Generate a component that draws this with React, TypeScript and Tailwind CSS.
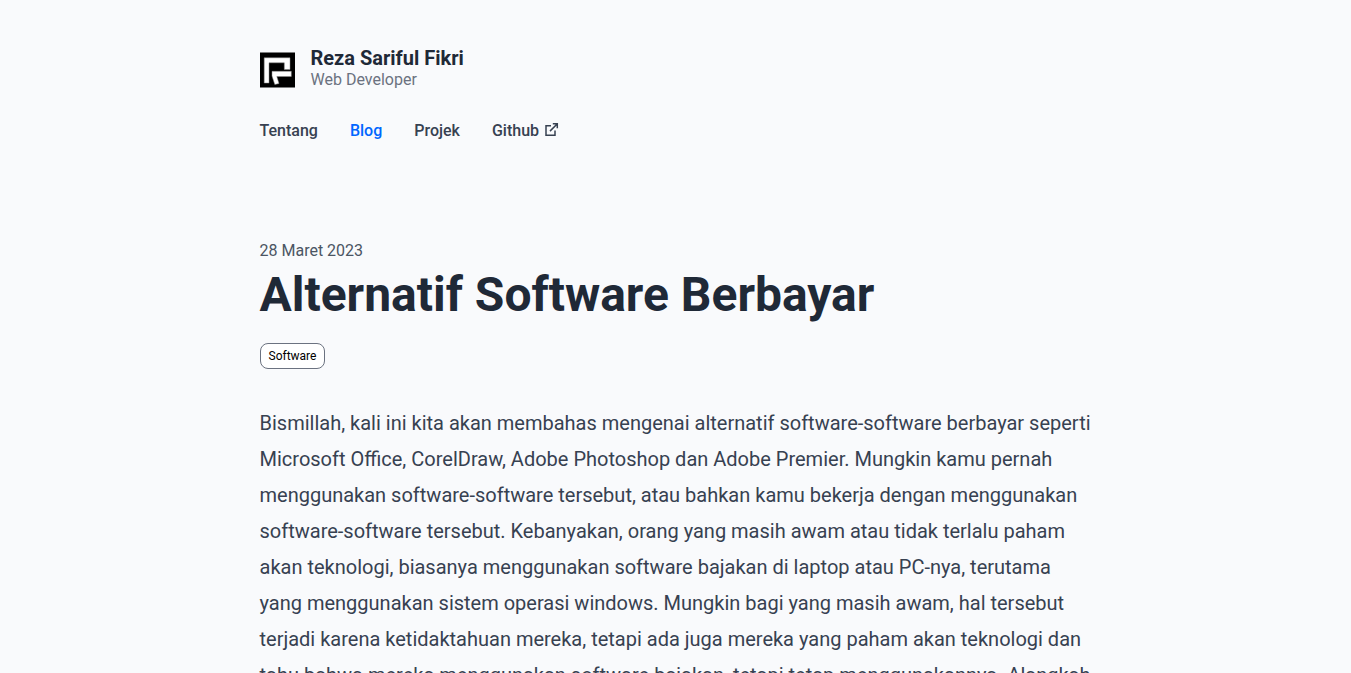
const links = [
  { label: 'Tentang', href: '#tentang' },
  { label: 'Blog', href: '#blog', active: true },
  { label: 'Projek', href: '#projek' },
  { label: 'Github', href: '#github', external: true },
];

function Logo() {
  return (
    <svg viewBox="0 -0.5 35 36" className="h-9 w-[35px] shrink-0" aria-hidden="true">
      <rect width="35" height="35" fill="#000" />
      <path d="M4.200 5.300H30V17H24.300V10.300H9V30.500H4.200Z" fill="#fff" stroke="#888" strokeWidth="0.5" />
      <path d="M12 18.800H31.300V24H16.800L19 31L14.800 32L12 23.500Z" fill="#fff" stroke="#888" strokeWidth="0.5" />
    </svg>
  );
}

function ExternalIcon() {
  return (
    <svg
      viewBox="0 1 14 16"
      className="h-4 w-3.5"
      fill="none"
      stroke="currentColor"
      strokeWidth="1.500"
      aria-hidden="true"
    >
      <path d="M6 3.800H1V13.300H10V8.500" />
      <path d="M7.800 1.800H12.300V6.300M12.100 2L5 9.100" />
    </svg>
  );
}

function Header() {
  return (
    <header>
      <div className="flex items-center gap-4">
        <Logo />
        <div>
          <p className="text-xl leading-5 font-bold text-[#1f2937]">Reza Sariful Fikri</p>
          <p className="text-base leading-6 text-[#6b7280]">Web Developer</p>
        </div>
      </div>
      <nav className="mt-[27px] flex gap-8">
        {links.map((link) => (
          <a
            key={link.label}
            href={link.href}
            className={`flex items-center gap-1.5 font-medium ${link.active ? 'text-[#0066ff]' : 'text-[#374151]'}`}
          >
            {link.label}
            {link.external && <ExternalIcon />}
          </a>
        ))}
      </nav>
    </header>
  );
}

export default function App() {
  return (
    <div className="min-h-screen bg-[#f9fafc] font-[Roboto,sans-serif]">
      <div className="mx-auto max-w-4xl px-8 pt-12">
        <Header />
        <main className="mt-24">
          <article>
            <p className="text-base text-[#4b5563]">28 Maret 2023</p>
            <h1 className="mt-2 text-5xl leading-none font-bold text-[#1f2937]">Alternatif Software Berbayar</h1>
            <div className="mt-6 flex">
              <a
                href="#software"
                className="rounded-lg border border-[#6b7280] bg-white px-2 py-1 text-xs text-black"
              >
                Software
              </a>
            </div>
            <p className="mt-9 text-xl leading-9 text-[#374151]">
              Bismillah, kali ini kita akan membahas mengenai alternatif software-software berbayar seperti Microsoft
              Office, CorelDraw, Adobe Photoshop dan Adobe Premier. Mungkin kamu pernah menggunakan software-software
              tersebut, atau bahkan kamu bekerja dengan menggunakan software-software tersebut. Kebanyakan, orang yang
              masih awam atau tidak terlalu paham akan teknologi, biasanya menggunakan software bajakan di laptop atau
              PC-nya, terutama yang menggunakan sistem operasi windows. Mungkin bagi yang masih awam, hal tersebut
              terjadi karena ketidaktahuan mereka, tetapi ada juga mereka yang paham akan teknologi dan tahu bahwa
              mereka menggunakan software bajakan, tetapi tetap menggunakannya. Alangkah
            </p>
          </article>
        </main>
      </div>
    </div>
  );
}
